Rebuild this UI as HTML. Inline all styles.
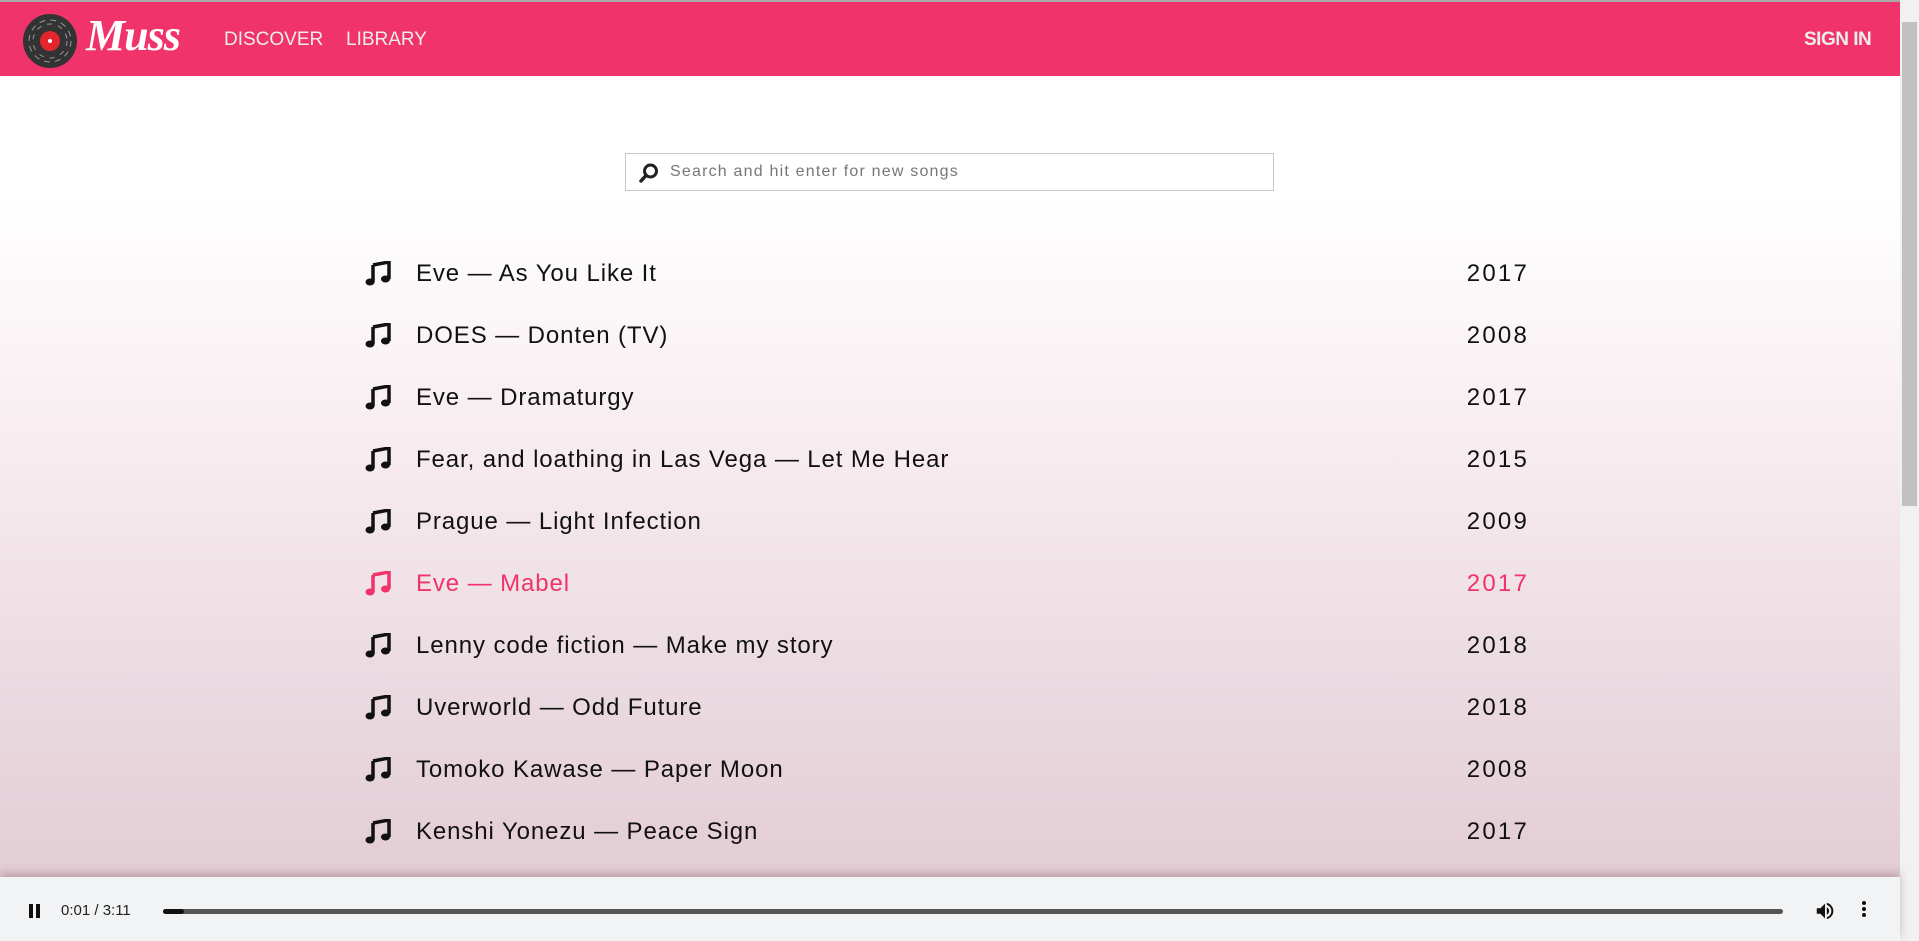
<!DOCTYPE html>
<html><head><meta charset="utf-8"><style>
*{margin:0;padding:0;box-sizing:border-box}
html,body{width:1919px;height:941px;overflow:hidden;font-family:"Liberation Sans",sans-serif}
body{position:relative;background:linear-gradient(180deg,#fff 0px,#fff 200px,#f8eef1 420px,#ead9e0 700px,#e3cdd5 870px)}
.hdr{position:absolute;left:0;top:0;width:1900px;height:76px;background:#f0336a;border-top:2px solid #a9a9a9}
.nav{position:absolute;top:27px;color:#ececec;font-size:19px}
.sb{position:absolute;right:0;top:0;width:19px;height:941px;background:#f1f1f1}
.thumb{position:absolute;left:2px;top:22px;width:15px;height:484px;background:#c1c1c1}
.search{position:absolute;left:625px;top:153px;width:649px;height:38px;border:1px solid #c8c8c8;background:#fff}
.search span{position:absolute;left:44px;top:9px;font-size:16px;color:#777;letter-spacing:1.2px}
.row{position:absolute;left:365px;width:1162px;height:30px;font-size:24px;color:#111;letter-spacing:0.9px}
.row .t{position:absolute;left:51px;top:1px}
.row .y{position:absolute;right:0;top:1px;letter-spacing:2.2px;margin-right:-2px}
.row svg{position:absolute;left:0;top:2px}
.pink{color:#f0336a}
.player{position:absolute;left:0;top:877px;width:1900px;height:64px;background:#f1f3f4;box-shadow:0 -4px 8px rgba(120,80,95,.35)}
</style></head><body>
<div class="hdr">
 <svg style="position:absolute;left:20px;top:9px" width="62" height="60" viewBox="0 0 62 60">
  <circle cx="30" cy="30" r="27" fill="#333"/>
  <circle cx="30" cy="30" r="21" fill="none" stroke="#999" stroke-width="1" stroke-dasharray="6 5"/>
  <circle cx="30" cy="30" r="17" fill="none" stroke="#999" stroke-width="1" stroke-dasharray="5 6"/>
  <circle cx="30" cy="30" r="10" fill="#e3262e"/>
  <circle cx="30" cy="30" r="2" fill="#fff"/>
 </svg>
 <div style="position:absolute;left:86px;top:8px;font-family:'Liberation Serif',serif;font-style:italic;font-weight:bold;font-size:44px;color:#fff;letter-spacing:-1px">Muss</div>
 <div class="nav" style="left:224px">DISCOVER</div>
 <div class="nav" style="left:346px">LIBRARY</div>
 <div class="nav" style="left:1804px;font-weight:bold;letter-spacing:-0.5px">SIGN IN</div>
</div>
<div class="sb"><div class="thumb"></div></div>
<div class="search">
 <svg style="position:absolute;left:12px;top:8px" width="22" height="22" viewBox="0 0 22 22"><circle cx="12.5" cy="9" r="6" fill="none" stroke="#222" stroke-width="3"/><path d="M8 13.5L3 19" stroke="#222" stroke-width="3.5" stroke-linecap="round"/></svg>
 <span>Search and hit enter for new songs</span>
</div>
<div class="row" style="top:259px"><svg width="26" height="26" viewBox="0 0 26 26"><path d="M8 4L24 1V18" fill="none" stroke="currentColor" stroke-width="3.5"/><ellipse cx="5" cy="21" rx="4.5" ry="3.5" fill="currentColor"/><ellipse cx="20.5" cy="18" rx="4.5" ry="3.5" fill="currentColor"/><path d="M8 4V21" stroke="currentColor" stroke-width="3.5"/></svg><span class="t">Eve — As You Like It</span><span class="y">2017</span></div>
<div class="row" style="top:321px"><svg width="26" height="26" viewBox="0 0 26 26"><path d="M8 4L24 1V18" fill="none" stroke="currentColor" stroke-width="3.5"/><ellipse cx="5" cy="21" rx="4.5" ry="3.5" fill="currentColor"/><ellipse cx="20.5" cy="18" rx="4.5" ry="3.5" fill="currentColor"/><path d="M8 4V21" stroke="currentColor" stroke-width="3.5"/></svg><span class="t">DOES — Donten (TV)</span><span class="y">2008</span></div>
<div class="row" style="top:383px"><svg width="26" height="26" viewBox="0 0 26 26"><path d="M8 4L24 1V18" fill="none" stroke="currentColor" stroke-width="3.5"/><ellipse cx="5" cy="21" rx="4.5" ry="3.5" fill="currentColor"/><ellipse cx="20.5" cy="18" rx="4.5" ry="3.5" fill="currentColor"/><path d="M8 4V21" stroke="currentColor" stroke-width="3.5"/></svg><span class="t">Eve — Dramaturgy</span><span class="y">2017</span></div>
<div class="row" style="top:445px"><svg width="26" height="26" viewBox="0 0 26 26"><path d="M8 4L24 1V18" fill="none" stroke="currentColor" stroke-width="3.5"/><ellipse cx="5" cy="21" rx="4.5" ry="3.5" fill="currentColor"/><ellipse cx="20.5" cy="18" rx="4.5" ry="3.5" fill="currentColor"/><path d="M8 4V21" stroke="currentColor" stroke-width="3.5"/></svg><span class="t">Fear, and loathing in Las Vega — Let Me Hear</span><span class="y">2015</span></div>
<div class="row" style="top:507px"><svg width="26" height="26" viewBox="0 0 26 26"><path d="M8 4L24 1V18" fill="none" stroke="currentColor" stroke-width="3.5"/><ellipse cx="5" cy="21" rx="4.5" ry="3.5" fill="currentColor"/><ellipse cx="20.5" cy="18" rx="4.5" ry="3.5" fill="currentColor"/><path d="M8 4V21" stroke="currentColor" stroke-width="3.5"/></svg><span class="t">Prague — Light Infection</span><span class="y">2009</span></div>
<div class="row pink" style="top:569px"><svg width="26" height="26" viewBox="0 0 26 26"><path d="M8 4L24 1V18" fill="none" stroke="currentColor" stroke-width="3.5"/><ellipse cx="5" cy="21" rx="4.5" ry="3.5" fill="currentColor"/><ellipse cx="20.5" cy="18" rx="4.5" ry="3.5" fill="currentColor"/><path d="M8 4V21" stroke="currentColor" stroke-width="3.5"/></svg><span class="t">Eve — Mabel</span><span class="y">2017</span></div>
<div class="row" style="top:631px"><svg width="26" height="26" viewBox="0 0 26 26"><path d="M8 4L24 1V18" fill="none" stroke="currentColor" stroke-width="3.5"/><ellipse cx="5" cy="21" rx="4.5" ry="3.5" fill="currentColor"/><ellipse cx="20.5" cy="18" rx="4.5" ry="3.5" fill="currentColor"/><path d="M8 4V21" stroke="currentColor" stroke-width="3.5"/></svg><span class="t">Lenny code fiction — Make my story</span><span class="y">2018</span></div>
<div class="row" style="top:693px"><svg width="26" height="26" viewBox="0 0 26 26"><path d="M8 4L24 1V18" fill="none" stroke="currentColor" stroke-width="3.5"/><ellipse cx="5" cy="21" rx="4.5" ry="3.5" fill="currentColor"/><ellipse cx="20.5" cy="18" rx="4.5" ry="3.5" fill="currentColor"/><path d="M8 4V21" stroke="currentColor" stroke-width="3.5"/></svg><span class="t">Uverworld — Odd Future</span><span class="y">2018</span></div>
<div class="row" style="top:755px"><svg width="26" height="26" viewBox="0 0 26 26"><path d="M8 4L24 1V18" fill="none" stroke="currentColor" stroke-width="3.5"/><ellipse cx="5" cy="21" rx="4.5" ry="3.5" fill="currentColor"/><ellipse cx="20.5" cy="18" rx="4.5" ry="3.5" fill="currentColor"/><path d="M8 4V21" stroke="currentColor" stroke-width="3.5"/></svg><span class="t">Tomoko Kawase — Paper Moon</span><span class="y">2008</span></div>
<div class="row" style="top:817px"><svg width="26" height="26" viewBox="0 0 26 26"><path d="M8 4L24 1V18" fill="none" stroke="currentColor" stroke-width="3.5"/><ellipse cx="5" cy="21" rx="4.5" ry="3.5" fill="currentColor"/><ellipse cx="20.5" cy="18" rx="4.5" ry="3.5" fill="currentColor"/><path d="M8 4V21" stroke="currentColor" stroke-width="3.5"/></svg><span class="t">Kenshi Yonezu — Peace Sign</span><span class="y">2017</span></div>
<div class="player">
 <div style="position:absolute;left:29px;top:27px;width:4px;height:14px;background:#111"></div>
 <div style="position:absolute;left:36px;top:27px;width:4px;height:14px;background:#111"></div>
 <div style="position:absolute;left:61px;top:25px;font-size:15px;color:#222">0:01 / 3:11</div>
 <div style="position:absolute;left:163px;top:32px;width:1620px;height:5px;background:#555;border-radius:3px"></div>
 <div style="position:absolute;left:163px;top:32px;width:21px;height:5px;background:#111;border-radius:3px"></div>
 <svg style="position:absolute;left:1814px;top:23px" width="22" height="22" viewBox="0 0 24 24"><path d="M3 9v6h4l5 5V4L7 9H3zm13.5 3A4.5 4.5 0 0 0 14 8v8a4.5 4.5 0 0 0 2.5-4zM14 3.2v2.1a7 7 0 0 1 0 13.4v2.1a9 9 0 0 0 0-17.6z" fill="#111"/></svg>
 <div style="position:absolute;left:1862px;top:24px;width:4px;height:4px;border-radius:2px;background:#111;box-shadow:0 6px 0 #111,0 12px 0 #111"></div>
</div>
</body></html>
